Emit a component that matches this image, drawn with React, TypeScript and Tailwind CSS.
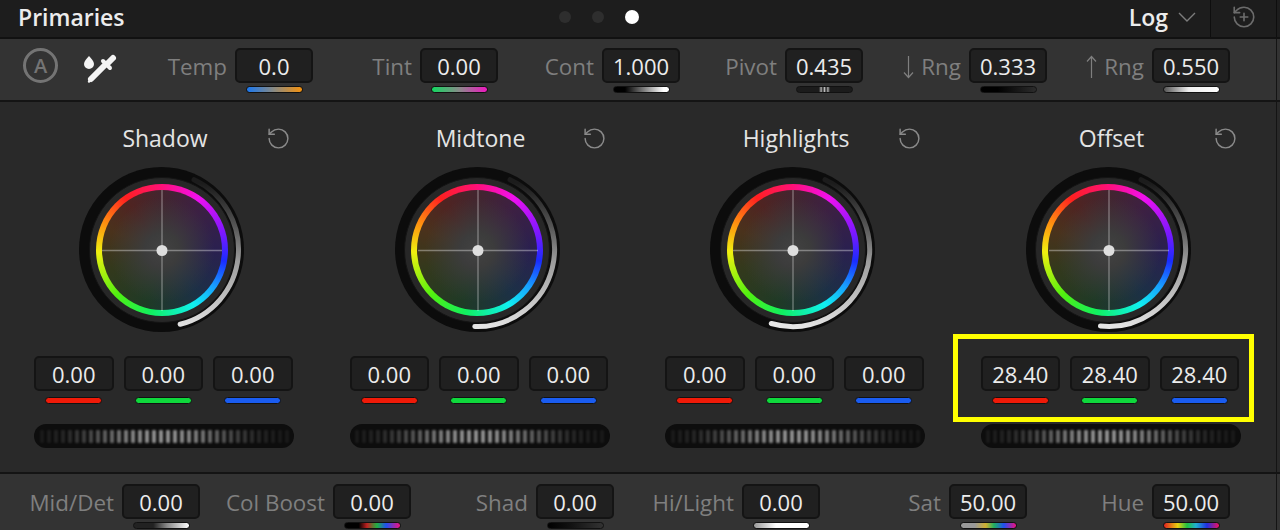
import { RotateCcw } from "lucide-react";

const topItems = [
  { label: "Temp", value: "0.0", wrap: "w-[183px]", bar: "bg-[linear-gradient(90deg,#1a78f0,#8c8a80_50%,#f5920f)]" },
  { label: "Tint", value: "0.00", wrap: "w-[185px]", bar: "bg-[linear-gradient(90deg,#12d860,#8a8a8a_50%,#ee18c0)]" },
  { label: "Cont", value: "1.000", wrap: "w-[182px]", bar: "bg-[linear-gradient(90deg,#000,#000_20%,#fff_90%)]" },
  { label: "Pivot", value: "0.435", wrap: "w-[183px]", bar: "bg-[linear-gradient(90deg,#1c1c1c_40%,#aaa_44%,#222_47%,#bbb_50%,#222_53%,#aaa_56%,#1c1c1c_60%)]" },
  { label: "Rng", arrow: "down", value: "0.333", wrap: "w-[184px]", bar: "bg-[linear-gradient(90deg,#000,#000_30%,#2c2c2c)]" },
  { label: "Rng", arrow: "up", value: "0.550", wrap: "w-[183px]", bar: "bg-[linear-gradient(90deg,#555,#eee_45%,#fff)]" },
];

const bottomItems = [
  { label: "Mid/Det", value: "0.00", wrap: "w-[200px]", bar: "bg-[linear-gradient(90deg,#222,#222_35%,#888_60%,#fff)]" },
  { label: "Col Boost", value: "0.00", wrap: "w-[211px]", bar: "bg-[linear-gradient(90deg,#000,#000_25%,#c02020_40%,#20b040_58%,#2050f0_75%,#f01080)]" },
  { label: "Shad", value: "0.00", wrap: "w-[203px]", bar: "bg-[linear-gradient(90deg,#000,#111_40%,#333)]" },
  { label: "Hi/Light", value: "0.00", wrap: "w-[206px]", bar: "bg-[linear-gradient(90deg,#999,#fff_40%,#fff)]" },
  { label: "Sat", value: "50.00", wrap: "w-[207px]", bar: "bg-[linear-gradient(90deg,#999,#999_25%,#d0b030_45%,#20b060_60%,#2050f0_78%,#f01080)]" },
  { label: "Hue", value: "50.00", wrap: "w-[203px]", bar: "bg-[linear-gradient(90deg,#e02020,#e8d010_25%,#20c040_42%,#20b0d0_58%,#2030e0_78%,#f01060)]" },
];

const wheels = [
  { title: "Shadow", arcStart: 166, values: ["0.00", "0.00", "0.00"] },
  { title: "Midtone", arcStart: 182, values: ["0.00", "0.00", "0.00"] },
  { title: "Highlights", arcStart: 196, values: ["0.00", "0.00", "0.00"] },
  { title: "Offset", arcStart: 186, values: ["28.40", "28.40", "28.40"] },
];

const rgbBars = ["bg-[#f01a08]", "bg-[#0fd83c]", "bg-[#1a5cf0]"];

// angle is clockwise from the top of the wheel
function polar(angle: number, r: number) {
  const a = (angle * Math.PI) / 180;
  return `${(82.5 + r * Math.sin(a)).toFixed(2)} ${(82.5 - r * Math.cos(a)).toFixed(2)}`;
}

function Field({ value, width = "w-[78px]", bar, barGap = "mt-[3px]" }: { value: string; width?: string; bar: string; barGap?: string }) {
  return (
    <div className="flex flex-col items-center">
      <div className={`${width} h-[35px] pt-[1px] flex items-center justify-center rounded-[5px] border-2 border-[#141414] bg-[#202020] text-[22px] text-[#ececec]`}>
        {value}
      </div>
      <div className={`${barGap} w-[57px] h-[7px] rounded-full border border-[#111] ${bar}`} />
    </div>
  );
}

function LabeledField({ label, arrow, value, wrap, bar }: { label: string; arrow?: string; value: string; wrap: string; bar: string }) {
  return (
    <div className={`${wrap} flex justify-end items-start gap-2`}>
      <span className="h-[35px] pt-[3px] flex items-center gap-[7px] text-[22.4px] text-[#7f7f7f] whitespace-nowrap">
        {arrow && (
          <svg className={arrow === "up" ? "rotate-180" : ""} width={11} height={24} viewBox="0 0 11 24" fill="none" stroke="#7f7f7f" strokeWidth={1.2}>
            <path d="M5.500 1V22.500M1 17.500l4.500 5 4.500-5" />
          </svg>
        )}
        {label}
      </span>
      <Field value={value} bar={bar} />
    </div>
  );
}

function Wheel({ arcStart }: { arcStart: number }) {
  return (
    <div className="relative ml-[45px] w-[165px] h-[165px] rounded-full bg-[#0c0c0c] flex items-center justify-center">
      <div className="w-[146px] h-[146px] rounded-full bg-[#272727] border border-[#141414] flex items-center justify-center">
        <div className="w-[132px] h-[132px] rounded-full flex items-center justify-center bg-[conic-gradient(#ff1078_0deg,#f010f0_35deg,#7a18ff_75deg,#1a2cff_100deg,#18a0ff_125deg,#10f0f0_150deg,#10f060_190deg,#50f010_225deg,#f0f010_268deg,#ff9010_295deg,#ff2020_325deg,#ff1078_360deg)]">
          <div className="w-[120px] h-[120px] rounded-full bg-[radial-gradient(circle,#424242_0%,#3c3c3c_20%,transparent_62%),conic-gradient(#43252f_0deg,#3d2042_40deg,#2a2050_90deg,#1c3046_140deg,#1f3a26_195deg,#33391c_250deg,#4a321c_290deg,#4f2422_325deg,#43252f_360deg)]" />
        </div>
      </div>
      <svg className="absolute inset-0" width={165} height={165} viewBox="0 0 165 165" fill="none">
        <defs>
          <linearGradient id={`arc-${arcStart}`} gradientUnits="userSpaceOnUse" x1="82" y1="160" x2="110" y2="6">
            <stop offset="0" stopColor="#e6e6e6" />
            <stop offset="0.5" stopColor="#9c9c9c" />
            <stop offset="0.72" stopColor="#555" />
            <stop offset="0.95" stopColor="#1c1c1c" />
          </linearGradient>
        </defs>
        <path
          d={`M${polar(arcStart, 77)} A77 77 0 0 0 ${polar(25, 77)}`}
          stroke={`url(#arc-${arcStart})`}
          strokeWidth={5}
          strokeLinecap="round"
        />
        <path d="M83 23V144M23 83.500H143" stroke="#fff" strokeOpacity={0.36} strokeWidth={1.3} />
        <circle cx={83} cy={83.500} r={5.500} fill="#dedede" />
      </svg>
    </div>
  );
}

function JogWheel() {
  const ridges = Array.from({ length: 36 }, (_, i) => i);
  return (
    <div className="mt-5 w-[260px] h-6 rounded-full bg-[#0d0d0d] flex items-center justify-center gap-[3px] overflow-hidden">
      {ridges.map((i) => {
        const t = (i - 17) / 18;
        return (
          <div
            key={i}
            className="w-1 h-[13px] rounded-[1px] bg-white blur-[1px]"
            style={{ opacity: 0.05 + 0.5 * Math.pow(Math.max(0, Math.cos(t * 1.5)), 2.4) }}
          />
        );
      })}
    </div>
  );
}

export default function App() {
  return (
    <div className="w-[1280px] h-[530px] overflow-hidden flex flex-col bg-[#292929] font-['Open_Sans',sans-serif]">
      {/* Title bar */}
      <div className="h-[39px] shrink-0 bg-[#1d1d1d] border-b-2 border-[#111]">
        <div className="w-[1277px] h-full flex items-center border-r border-[#0e0e0e]">
          <div className="w-[559px] pl-[18px] pb-[3px] text-[23px] font-semibold text-[#ececec]">Primaries</div>
          <div className="flex items-center gap-[21px] pb-[3px]">
            <div className="w-3 h-3 rounded-full bg-[#2e2e2e]" />
            <div className="w-3 h-3 rounded-full bg-[#2e2e2e]" />
            <div className="w-[14px] h-[14px] rounded-full bg-white" />
          </div>
          <div className="ml-auto pb-[3px] text-[23px] font-semibold text-[#ececec]">Log</div>
          <svg className="ml-[10px] mb-[3px]" width={18} height={10} viewBox="0 0 18 10" fill="none" stroke="#7c7c7c" strokeWidth={1.4}>
            <path d="M1 1l8 8 8-8" />
          </svg>
          <div className="ml-[14px] h-full border-l border-[#0e0e0e] w-[66px] pb-[3px] flex items-center justify-center">
            <svg width={26} height={26} viewBox="0 0 24 24" fill="none" stroke="#6c6c6c" strokeWidth={1.5} strokeLinecap="round" strokeLinejoin="round">
              <path d="M3 12a9 9 0 1 0 9-9 9.75 9.75 0 0 0-6.74 2.74L3 8" />
              <path d="M3 3v5h5" />
              <path d="M12 8.500v7M8.500 12h7" />
            </svg>
          </div>
        </div>
      </div>

      {/* Tool row */}
      <div className="h-[63px] shrink-0 bg-[#333333] border-b-2 border-[#141414]">
        <div className="w-[1277px] h-full flex items-start pt-[9px] border-r border-[#141414]">
          <div className="w-[130px] h-[35px] flex items-center shrink-0">
            <div className="ml-[23px] w-[35px] h-[35px] rounded-full border-[3px] border-[#747474] flex items-center justify-center text-[20px] font-semibold text-[#747474]">
              A
            </div>
            <svg className="ml-[25px]" width={36} height={36} viewBox="0 0 36 36" fill="none" stroke="#f4f4f4" strokeLinecap="round">
              <path d="M6 8c2.400 3 5 5 5 8a5 5 0 0 1-10 0c0-3 2.600-5 5-8z" fill="#f4f4f4" stroke="none" />
              <path d="M8 31l14-14" strokeWidth={6} />
              <path d="M6 33.500l2-2.500" strokeWidth={2.400} />
              <path d="M20 13l7 7" strokeWidth={4} />
              <path d="M25 15l5-5" strokeWidth={6} />
            </svg>
          </div>
          {topItems.map((item) => (
            <LabeledField key={item.value} {...item} />
          ))}
        </div>
      </div>

      {/* Wheels */}
      <div className="h-[372px] shrink-0 border-b-2 border-[#141414]">
        <div className="w-[1277px] h-full border-r border-[#141414] pl-1">
          <div className="w-[1262px] grid grid-cols-4">
            {wheels.map((wheel) => (
              <div key={wheel.title} className="relative pl-[30px] pt-[24px]">
                <div className="h-6 flex items-center">
                  <div className="ml-[31px] w-[200px] text-center text-[23px] leading-6 text-[#e4e4e4]">{wheel.title}</div>
                  <RotateCcw className="ml-[1px] text-[#8a8a8a]" size={25} strokeWidth={1.4} />
                </div>
                <div className="mt-[17px]">
                  <Wheel arcStart={wheel.arcStart} />
                </div>
                <div className="mt-[24px] flex gap-[10px]">
                  {wheel.values.map((value, i) => (
                    <Field key={i} value={value} width="w-[79.500px]" bar={rgbBars[i]} barGap="mt-[6px]" />
                  ))}
                </div>
                <JogWheel />
                {wheel.title === "Offset" && (
                  <div className="absolute left-[2.500px] top-[232px] w-[301px] h-[88px] border-[5px] border-[#ffff00]" />
                )}
              </div>
            ))}
          </div>
        </div>
      </div>

      {/* Adjustments row */}
      <div className="flex-1 bg-[#333333]">
        <div className="w-[1277px] h-full flex items-start pt-[10px] border-r border-[#141414]">
          {bottomItems.map((item) => (
            <LabeledField key={item.label} {...item} />
          ))}
        </div>
      </div>
    </div>
  );
}
